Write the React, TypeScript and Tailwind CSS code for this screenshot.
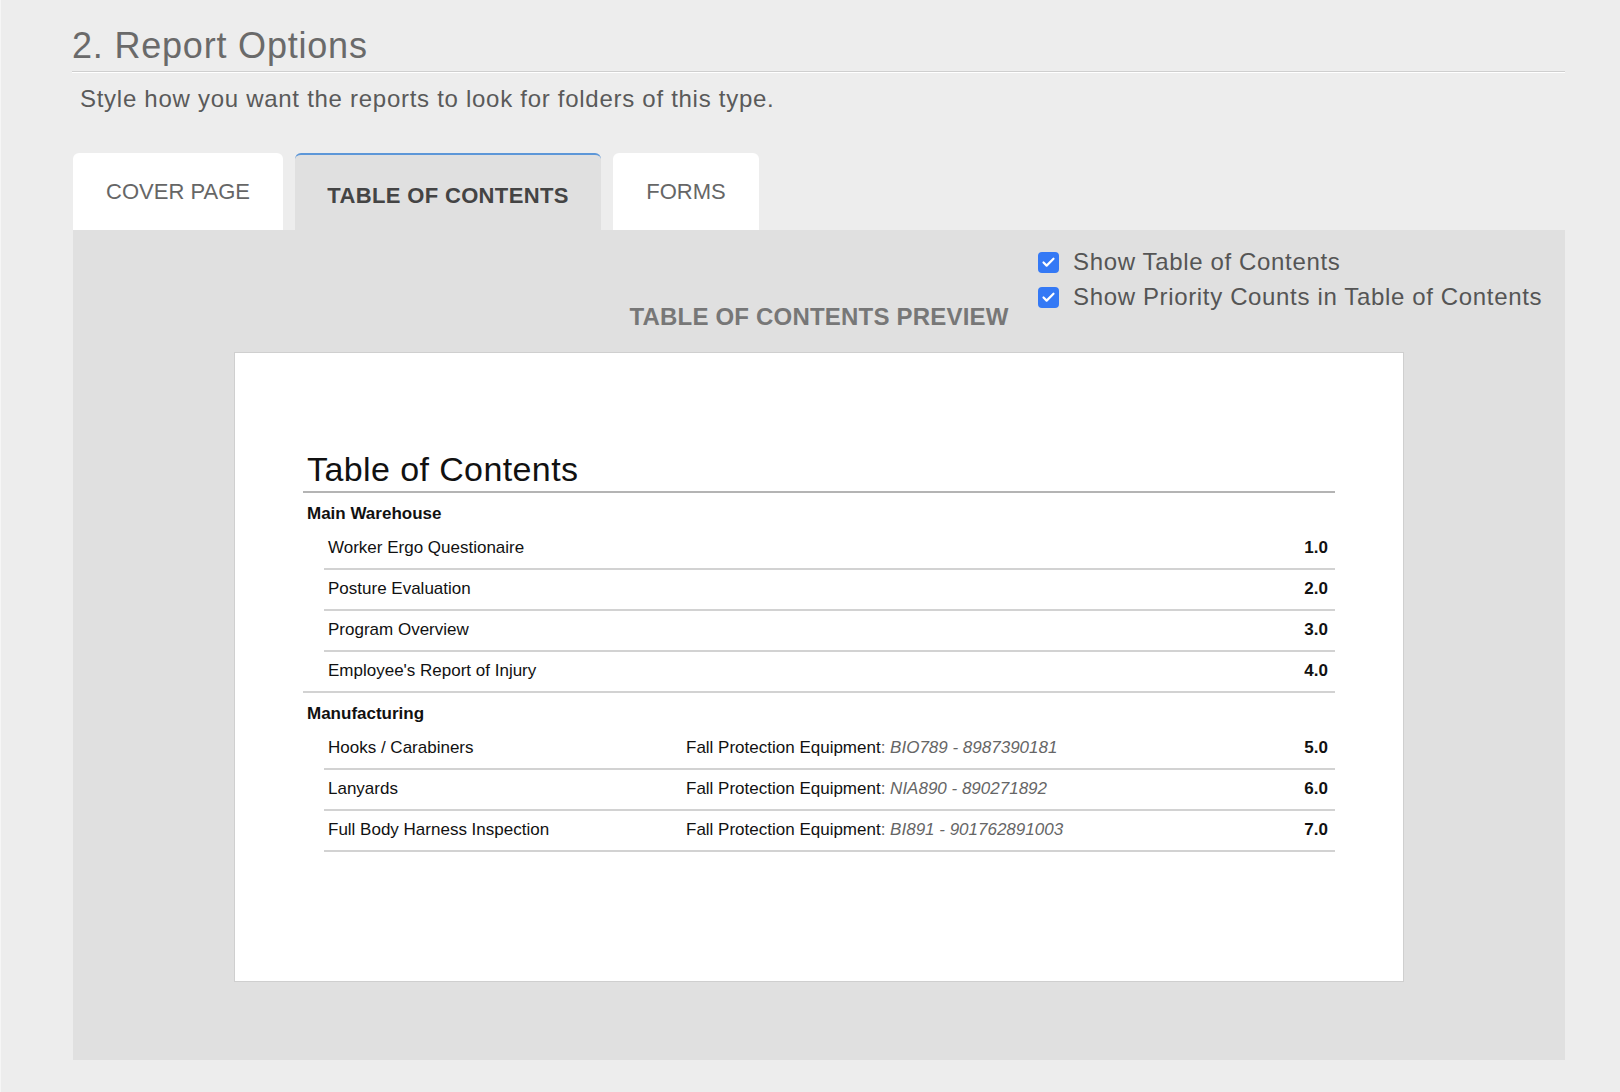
import { Check } from "lucide-react";

type TocRow = {
  title: string;
  source?: string;
  ref?: string;
  page: string;
  wide?: boolean;
};

type TocGroup = {
  name: string;
  rows: TocRow[];
};

const TABS = ["COVER PAGE", "TABLE OF CONTENTS", "FORMS"];
const TAB_WIDTHS = ["w-[210px]", "w-[306px]", "w-[146px]"];
const ACTIVE_TAB = 1;

const GROUPS: TocGroup[] = [
  {
    name: "Main Warehouse",
    rows: [
      { title: "Worker Ergo Questionaire", page: "1.0" },
      { title: "Posture Evaluation", page: "2.0" },
      { title: "Program Overview", page: "3.0" },
      { title: "Employee's Report of Injury", page: "4.0", wide: true },
    ],
  },
  {
    name: "Manufacturing",
    rows: [
      {
        title: "Hooks / Carabiners",
        source: "Fall Protection Equipment",
        ref: "BIO789 - 8987390181",
        page: "5.0",
      },
      {
        title: "Lanyards",
        source: "Fall Protection Equipment",
        ref: "NIA890 - 890271892",
        page: "6.0",
      },
      {
        title: "Full Body Harness Inspection",
        source: "Fall Protection Equipment",
        ref: "BI891 - 901762891003",
        page: "7.0",
      },
    ],
  },
];

const OPTIONS = ["Show Table of Contents", "Show Priority Counts in Table of Contents"];

function Checkbox({ label }: { label: string }) {
  return (
    <label className="flex h-[24px] items-center gap-[14px]">
      <span className="flex h-[21px] w-[21px] items-center justify-center rounded-[4px] bg-[#3479f5]">
        <Check size={15} strokeWidth={3.5} className="text-white" />
      </span>
      <span className="text-[24px] leading-[24px] tracking-[0.65px] text-[#555]">{label}</span>
    </label>
  );
}

function TocPreview() {
  return (
    <div className="mx-auto mt-[27px] h-[630px] w-[1170px] border border-[#cfcfcf] bg-white px-[68px] pt-[97px] font-['Liberation_Sans',Arial,sans-serif] text-[#111]">
      <h3 className="border-b-2 border-[#b4b4b4] pb-[3px] pl-[4px] text-[34px] leading-[38px] tracking-[0.4px]">
        Table of Contents
      </h3>
      {GROUPS.map((group) => (
        <div key={group.name}>
          <div className="pl-[4px] pt-[11px] pb-[5px] text-[17px] font-bold leading-[20px]">
            {group.name}
          </div>
          {group.rows.map((row) => (
            <div
              key={row.title}
              className={`flex border-b-2 border-[#d2d2d2] pt-[9px] pb-[10px] text-[17px] leading-[20px] ${
                row.wide ? "pl-[25px]" : "ml-[21px] pl-[4px]"
              }`}
            >
              <span className="w-[358px] shrink-0">{row.title}</span>
              <span className="flex-1">
                {row.source && (
                  <>
                    {row.source}
                    <span className="text-[#666]">: </span>
                    <span className="italic text-[#666]">{row.ref}</span>
                  </>
                )}
              </span>
              <span className="pr-[7px] font-bold">{row.page}</span>
            </div>
          ))}
        </div>
      ))}
    </div>
  );
}

export default function App() {
  return (
    <div className="min-h-[1092px] border-l border-[#f6f6f6] bg-[#ededed] font-['Liberation_Sans',Arial,sans-serif]">
      <div className="ml-[71px] w-[1493px]">
        <h2 className="border-b border-[#cfcfcf] pt-[25px] pb-[4px] text-[36px] font-light leading-[42px] tracking-[0.8px] text-[#6a6a6a]">
          2. Report Options
        </h2>
        <div className="h-px bg-white" />
        <p className="mt-[12px] pl-[8px] text-[24px] leading-[28px] tracking-[0.72px] text-[#5a5a5a]">
          Style how you want the reports to look for folders of this type.
        </p>

        <div className="mt-[40px] flex gap-[12px] pl-[1px]">
          {TABS.map((tab, i) => (
            <div
              key={tab}
              className={`flex h-[77px] items-center justify-center rounded-t-[6px] text-[22px] ${TAB_WIDTHS[i]} ${
                i === ACTIVE_TAB
                  ? "border-t-2 border-[#5d97d8] bg-[#e0e0e0] pt-[6px] font-bold tracking-[0.35px] text-[#444]"
                  : "bg-white text-[#666]"
              }`}
            >
              {tab}
            </div>
          ))}
        </div>

        <div className="ml-[1px] h-[830px] bg-[#e0e0e0] pt-[20px]">
          <div className="ml-[965px] flex flex-col gap-[11px]">
            {OPTIONS.map((opt) => (
              <Checkbox key={opt} label={opt} />
            ))}
          </div>
          <div className="text-center text-[24px] font-bold leading-[16px] tracking-[0.2px] text-[#777]">
            TABLE OF CONTENTS PREVIEW
          </div>
          <TocPreview />
        </div>
      </div>
    </div>
  );
}
